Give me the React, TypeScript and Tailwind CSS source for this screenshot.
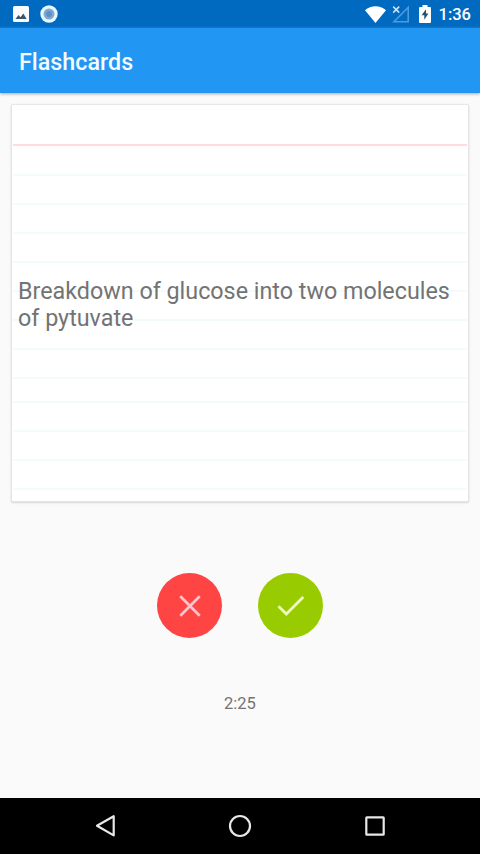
const RULE_ROWS = [
  "h-[29px]", "h-[29px]", "h-[29px]", "h-[29px]", "h-[29px]", "h-[29px]",
  "h-[29px]", "h-[29px]", "h-[24px]", "h-[29px]", "h-[29px]", "h-[29px]",
];

function StatusBar() {
  return (
    <div className="flex h-7 items-center justify-between bg-[#0069c0] pl-[13px] pr-[9px] text-white">
      <div className="flex items-center gap-[11px]">
        <svg width="16" height="16" viewBox="0 0 16 16">
          <rect width="16" height="16" rx="1.5" fill="#fafdff" />
          <path d="M2.5 13 5.5 9 7.5 11.3 10.3 7.6 13.7 13z" fill="#3e5669" />
        </svg>
        <svg width="18" height="18" viewBox="0 0 18 18">
          <circle cx="9" cy="9" r="8.7" fill="#e9f7ff" />
          <circle cx="9" cy="9" r="5.5" fill="#7fa9d2" />
          <circle cx="9" cy="9" r="3" fill="#5b91c6" />
        </svg>
      </div>
      <div className="flex items-center">
        <svg width="21" height="17" viewBox="0 0 21 17">
          <path d="M0 4.2C6-1 15-1 21 4.2L10.5 17z" fill="#fff" />
        </svg>
        <svg className="ml-[6px]" width="18" height="18" viewBox="0 0 18 18" fill="none">
          <path d="M16.2 2.5V16.7H2z" stroke="#4a9be0" strokeWidth="1.6" />
          <path d="M0 0H8.5V9H0z" fill="#0069c0" />
          <path d="m1.2 1.6 6 6m0-6-6 6" stroke="#c8e6ff" strokeWidth="1.5" />
        </svg>
        <svg className="ml-[9px]" width="12" height="18" viewBox="0 0 12 18">
          <path d="M1 2H3.5V0H8.5V2H11a1 1 0 0 1 1 1V17a1 1 0 0 1-1 1H1a1 1 0 0 1-1-1V3a1 1 0 0 1 1-1z" fill="#fff" />
          <path d="M7 4.2 2.6 10.2H5.3V14.8L9.4 8.6H7z" fill="#28516f" />
        </svg>
        <span className="ml-2 pt-[2px] text-[16.5px] font-medium leading-[26px]">1:36</span>
      </div>
    </div>
  );
}

function Flashcard({ text }: { text: string }) {
  return (
    <div className="relative mx-3 mt-3 h-[396px] rounded-[1px] bg-white px-px shadow-[0_0_1px_1px_#e6e6e6,0_1px_2px_1px_#d4d4d4]">
      <div className="h-[41px] border-b-2 border-[#ffdcda]" />
      <div className="pt-px">
        {RULE_ROWS.map((height, i) => (
          <div key={i} className={`${height} border-b-2 border-[#f3fbfc]`} />
        ))}
      </div>
      <div className="absolute inset-0 flex items-center pl-[6px] pt-[4px]">
        <p className="text-[23.3px] leading-[27.5px] text-[#737373]">{text}</p>
      </div>
    </div>
  );
}

function NavigationBar() {
  return (
    <div className="flex h-14 items-center bg-black pl-[95px]">
      <svg width="21" height="24" viewBox="0 0 21 24" fill="none" stroke="#e8e8e8" strokeWidth="2.2">
        <path d="M18.7 2.2V21.4L2 11.8z" strokeLinejoin="round" />
      </svg>
      <svg className="ml-[112px]" width="24" height="24" viewBox="0 0 24 24" fill="none">
        <circle cx="12" cy="12" r="10" stroke="#e8e8e8" strokeWidth="2.2" />
      </svg>
      <svg className="ml-[113px]" width="20" height="20" viewBox="0 0 20 20" fill="none">
        <rect x="1.3" y="1.3" width="17.4" height="17.4" rx="0.5" stroke="#e8e8e8" strokeWidth="2.2" />
      </svg>
    </div>
  );
}

export default function App() {
  return (
    <div className="flex h-[854px] w-[480px] flex-col overflow-hidden bg-[#fafafa] font-['Roboto',sans-serif]">
      <StatusBar />
      <header className="flex h-[65px] items-center bg-[#2196f3] pl-[19px] pt-[4px] shadow-[0_1px_3px_#a8a8a8]">
        <h1 className="text-[23.3px] font-medium text-[#f2fbff]">Flashcards</h1>
      </header>
      <main className="flex-1">
        <Flashcard text="Breakdown of glucose into two molecules of pytuvate" />
        <div className="mt-[72px] flex justify-center gap-[36px]">
          <button className="flex size-[65px] items-center justify-center rounded-full bg-[#ff4444]" aria-label="Wrong">
            <svg width="22" height="22" viewBox="0 0 22 22" fill="none">
              <path d="M1.3 1.3 20.7 20.7M20.7 1.3 1.3 20.7" stroke="#ffc7cb" strokeWidth="2.7" />
            </svg>
          </button>
          <button className="flex size-[65px] items-center justify-center rounded-full bg-[#99cc00]" aria-label="Right">
            <svg width="28" height="22" viewBox="0 0 28 22" fill="none">
              <path d="M1.5 11.2 9.3 19 26.3 2" stroke="#edfac0" strokeWidth="2.7" />
            </svg>
          </button>
        </div>
        <p className="mt-[54px] text-center text-[16.5px] leading-6 text-[#737373]">2:25</p>
      </main>
      <NavigationBar />
    </div>
  );
}
